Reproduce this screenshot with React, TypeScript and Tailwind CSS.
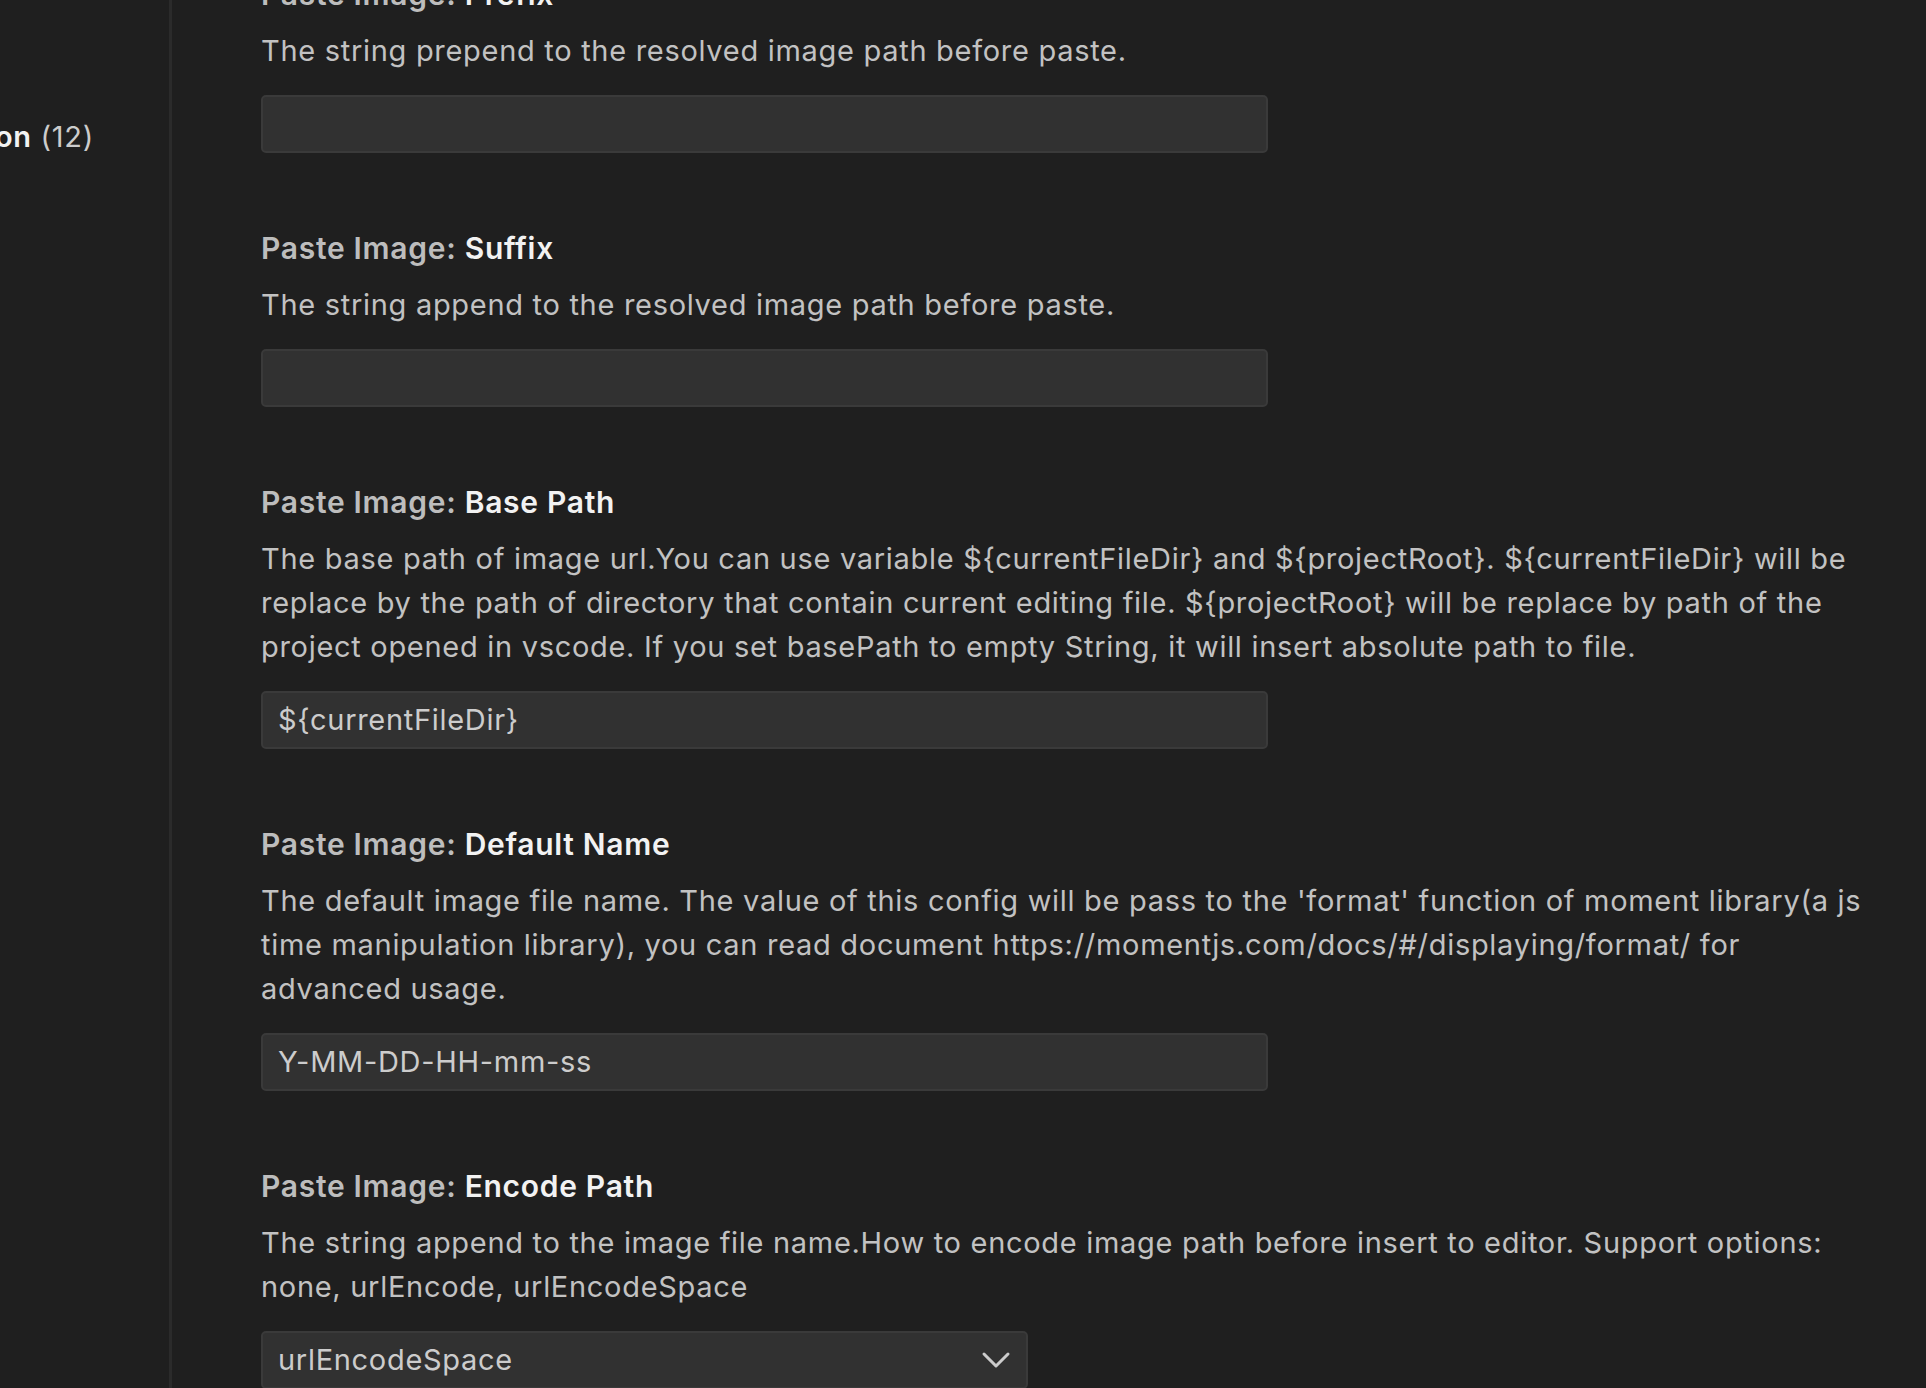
import { ChevronDown } from "lucide-react";

interface SettingProps {
  name: string;
  lines: string;
  value?: string;
  select?: boolean;
}

function Setting({ name, lines, value, select }: SettingProps) {
  return (
    <div className="flex flex-col">
      <div className="h-[44px] leading-[44px] text-[30px] font-semibold whitespace-nowrap">
        <span className="text-[#bdbdbd]">Paste Image: </span>
        <span className="text-[#f2f2f2]">{name}</span>
      </div>
      <p className="mt-[13px] leading-[44px] text-[#c2c2c2] max-w-[1610px]">{lines}</p>
      {select ? (
        <div className="mt-[22px] h-[58px] w-[767px] flex items-center justify-between pl-[15px] pr-[6px] bg-[#313131] border-2 border-[#3a3a3a] rounded-[5px] text-[#cccccc]">
          <span>{value}</span>
          <ChevronDown className="w-[48px] h-[48px] text-[#cccccc]" strokeWidth={1.5} />
        </div>
      ) : (
        <div className="mt-[22px] h-[58px] w-[1007px] flex items-center pl-[15px] bg-[#313131] border-2 border-[#3a3a3a] rounded-[5px] text-[#cccccc]">
          {value}
        </div>
      )}
    </div>
  );
}

export default function App() {
  return (
    <div
      className="w-full h-[1388px] bg-[#1f1f1f] overflow-hidden flex text-[29px] tracking-[0.7px]"
      style={{ fontFamily: "Inter, 'Noto Sans', sans-serif" }}
    >
      <div className="w-[172px] shrink-0 border-r-[3px] border-[#2b2b2b] pt-[115px]">
        <div className="w-[94px] overflow-hidden flex justify-end whitespace-nowrap leading-[44px]">
          <span className="font-semibold text-[#f2f2f2]">Configuration</span>
          <span className="text-[#cccccc]">&nbsp;(12)</span>
        </div>
      </div>
      <div className="flex-1 pl-[89px] mt-[-28px] flex flex-col gap-[73px]">
        <Setting name="Prefix" lines="The string prepend to the resolved image path before paste." />
        <Setting name="Suffix" lines="The string append to the resolved image path before paste." />
        <Setting
          name="Base Path"
          lines="The base path of image url.You can use variable ${currentFileDir} and ${projectRoot}. ${currentFileDir} will be replace by the path of directory that contain current editing file. ${projectRoot} will be replace by path of the project opened in vscode. If you set basePath to empty String, it will insert absolute path to file."
          value="${currentFileDir}"
        />
        <Setting
          name="Default Name"
          lines="The default image file name. The value of this config will be pass to the 'format' function of moment library(a js time manipulation library), you can read document https://momentjs.com/docs/#/displaying/format/ for advanced usage."
          value="Y-MM-DD-HH-mm-ss"
        />
        <Setting
          name="Encode Path"
          lines="The string append to the image file name.How to encode image path before insert to editor. Support options: none, urlEncode, urlEncodeSpace"
          value="urlEncodeSpace"
          select
        />
      </div>
    </div>
  );
}
